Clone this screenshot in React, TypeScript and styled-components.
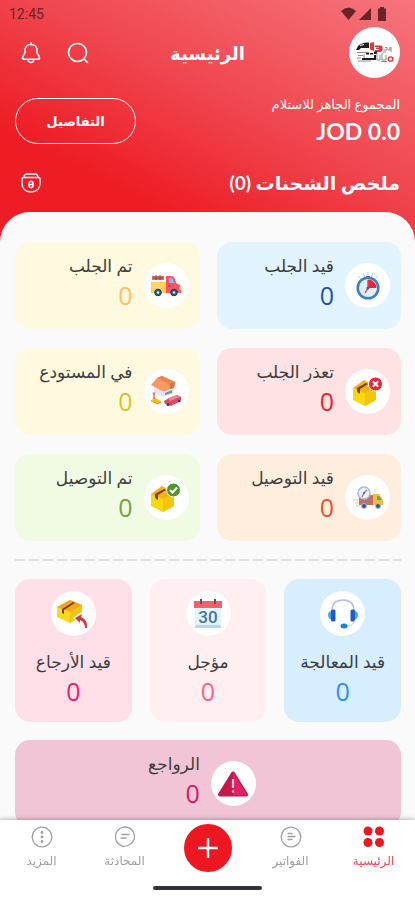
import React from "react";
import styled, { createGlobalStyle } from "styled-components";

const GlobalStyle = createGlobalStyle`
  *, *::before, *::after { box-sizing: border-box; }
  body { margin: 0; background: #fafafa; }
  button { font: inherit; color: inherit; background: none; border: 0; padding: 0; cursor: pointer; }
  h1, h2, h3, p { margin: 0; font-weight: normal; }
  svg { display: block; flex: none; }
`;

const Screen = styled.div`
  display: flex;
  flex-direction: column;
  height: 100vh;
  background: #ee1c25;
  font-family: Lato, "DejaVu Sans", sans-serif;
  color: #3d3d3f;
`;

const Header = styled.header`
  display: flex;
  flex-direction: column;
  margin-bottom: -36px;
  padding-bottom: 50px;
  color: #fff;
  background: linear-gradient(207deg, #f6757d 0%, #f0474f 42%, #ee1c25 74%);
`;

const StatusBar = styled.div`
  display: flex;
  align-items: center;
  justify-content: space-between;
  height: 27px;
  padding: 0 25px 0 9px;
  font-family: Roboto, sans-serif;
  font-size: 14px;
  color: #6b2327;
`;

const StatusIcons = styled.div`
  display: flex;
  gap: 3px;
`;

const TopBar = styled.div`
  display: grid;
  grid-template-columns: 1fr auto 1fr;
  align-items: center;
  padding: 0 15px;
`;

const Avatar = styled.div`
  display: grid;
  place-items: center;
  width: 51px;
  height: 51px;
  border-radius: 50%;
  background: #fff;
`;

const PageTitle = styled.h1`
  font-size: 18px;
  font-weight: bold;
  line-height: 28px;
`;

const Actions = styled.div`
  display: flex;
  justify-content: flex-end;
  gap: 25px;
  padding-left: 6px;
`;

const BalanceRow = styled.div`
  display: flex;
  align-items: center;
  justify-content: space-between;
  padding: 16px 15px 0;
`;

const BalanceLabel = styled.p`
  font-size: 13px;
  line-height: 20px;
`;

const BalanceValue = styled.p`
  font-size: 23px;
  font-weight: bold;
  line-height: 34px;
`;

const DetailsButton = styled.button`
  width: 121px;
  height: 46px;
  border: 1px solid #fff;
  border-radius: 23px;
  font-size: 13px;
  font-weight: bold;
`;

const SummaryRow = styled.div`
  display: flex;
  align-items: center;
  justify-content: space-between;
  padding: 20px 15px 0 21px;
`;

const SummaryTitle = styled.h2`
  font-size: 19px;
  font-weight: bold;
  line-height: 30px;
`;

const Sheet = styled.main`
  display: flex;
  flex: 1;
  flex-direction: column;
  gap: 18px;
  min-height: 0;
  padding: 30px 14px 24px 15px;
  overflow-y: auto;
  scrollbar-width: none;
  border-radius: 30px 30px 0 0;
  background: #fafafa;
`;

const PairGrid = styled.section`
  display: grid;
  grid-template-columns: 1fr 1fr;
  gap: 19px 17px;
`;

const TripleGrid = styled.section`
  display: grid;
  grid-template-columns: repeat(3, 1fr);
  gap: 18px;
`;

const Card = styled.button<{ $tint: string; $centered?: boolean }>`
  display: flex;
  flex: none;
  align-items: center;
  justify-content: ${(p) => (p.$centered ? "center" : "flex-start")};
  gap: 11px;
  height: 87px;
  padding: ${(p) => (p.$centered ? "0 20px 0 8px" : "0 11px")};
  border-radius: 15px;
  background: ${(p) => p.$tint};
  text-align: right;
`;

const TallCard = styled.button<{ $tint: string }>`
  display: flex;
  flex-direction: column;
  align-items: center;
  padding: 12px 0 15px;
  border-radius: 15px;
  background: ${(p) => p.$tint};
`;

const IconDisc = styled.span`
  display: grid;
  flex: none;
  place-items: center;
  width: 45px;
  height: 45px;
  border-radius: 50%;
  background: #fff;
`;

const CardText = styled.span`
  display: flex;
  flex-direction: column;
  padding-bottom: 9px;
`;

const CardLabel = styled.span`
  font-size: 17px;
  line-height: 28px;
`;

const TallLabel = styled(CardLabel)`
  margin-top: 12px;
`;

const Count = styled.span<{ $color: string }>`
  font-family: "Open Sans", sans-serif;
  font-size: 25px;
  line-height: 31px;
  color: ${(p) => p.$color};
`;

const Divider = styled.hr`
  flex: none;
  width: 100%;
  height: 2px;
  margin: 0;
  border: 0;
  background: repeating-linear-gradient(90deg, #e0e0e0 0 10px, transparent 10px 14px);
`;

const BottomBar = styled.footer`
  z-index: 1;
  flex: none;
  padding-bottom: 10px;
  background: #fff;
  box-shadow: 0 -1px 4px rgba(0, 0, 0, 0.28);
`;

const Nav = styled.nav`
  display: grid;
  grid-template-columns: repeat(5, 1fr);
  height: 66px;
`;

const NavItem = styled.a<{ $active?: boolean }>`
  display: flex;
  flex-direction: column;
  align-items: center;
  gap: 3px;
  padding-top: 6px;
  font-size: 12px;
  line-height: 20px;
  text-decoration: none;
  color: ${(p) => (p.$active ? "#ef4a52" : "#a0a0a0")};
`;

const AddButton = styled.button`
  display: grid;
  place-items: center;
  justify-self: center;
  width: 48px;
  height: 48px;
  margin-top: 4px;
  border-radius: 50%;
  background: #ee1620;
`;

const HomeIndicator = styled.div`
  width: 109px;
  height: 4px;
  margin: 0 auto;
  border-radius: 2px;
  background: #333437;
`;

const line = { fill: "none", stroke: "currentColor", strokeLinecap: "round", strokeLinejoin: "round" } as const;

const LogoMark = () => (
  <svg width="38" height="23" viewBox="0 0 38 23">
    <path d="M0 9 2 5Q6 1 13 1.500V7H5L3 9Z" fill="#202022" />
    <path d="M4 4.500 8 3.500" stroke="#fff" strokeWidth="1" />
    <path d="M14 2 18 1V10L14 8.500ZM19 4.500h5q3 0 2.500 3 .5 3.500-3.500 3.500h-4V9h4V8h-3V6.500h3V6h-4z" fill="#ed3037" />
    <path d="M28 9h3V6.500h-2M32 9h2V6M35 6v5M27 11h3" fill="none" stroke="#858585" strokeWidth="1" />
    <path d="M1 11.500h9M2 14.500h5M1 17h4M8 13v4M2 20h13" fill="none" stroke="#8a8c8f" strokeWidth="1" />
    <path d="M6 17h12v-3h2v5H6zM10 11.500h3v2h-3zM14 12h3v1.500h-3zM18 10.500h3V13h-3z" fill="#1f1f21" />
    <path d="M21 12v7h3v-5M26 12v7h4v-5M25 20.500h6" fill="none" stroke="#8a8a8c" strokeWidth="1" />
    <ellipse cx="34.500" cy="18" rx="2.300" ry="2.200" fill="none" stroke="#ed3037" strokeWidth="1.300" />
  </svg>
);

const BellIcon = () => (
  <svg width="20" height="22" viewBox="0 0 20 22" {...line} strokeWidth="1.600">
    <path d="M10 1v1.500M10 2.500c-3.500 0-6 2.500-6 6v2.200c0 1-2.500 3-2.500 5.300 0 1 1 1.200 2 1.200h13c1 0 2-.2 2-1.200 0-2.300-2.500-4.300-2.500-5.300V8.500c0-3.500-2.500-6-6-6Z" />
    <path d="M7 18c.6 1.600 1.600 2.500 3 2.500s2.400-.9 3-2.500" />
  </svg>
);

const SearchIcon = () => (
  <svg width="24" height="22" viewBox="0 0 24 22" {...line} strokeWidth="1.600">
    <circle cx="11.500" cy="10.500" r="9" />
    <path d="m18.500 17.500 3 3" />
  </svg>
);

const PouchIcon = () => (
  <svg width="20" height="20" viewBox="0 0 20 20" {...line} strokeWidth="1.500">
    <path d="M3 4Q3.500 1 6 1h8q2.500 0 3 3M1 6Q1 4.500 3 4.500h14q2 0 2 1.500v4c0 5.500-3.500 9-9 9s-9-3.500-9-9Z" />
    <rect x="8" y="8.500" width="4" height="6" rx="1.500" />
    <path d="M8.500 11.500h3" />
  </svg>
);

const StopwatchIcon = () => (
  <svg width="26" height="30" viewBox="0 0 26 30" fill="none">
    <path d="M3 5 6 8M8 2l2 5M13 1v4M18 2l-2 5M23 5l-3 3" stroke="#a9cdea" strokeWidth="1" />
    <path d="M11 5h4v3h-4z" fill="#3979bd" />
    <circle cx="13" cy="17" r="10.300" fill="#e3edf8" stroke="#397fc8" strokeWidth="2.500" />
    <path d="M13 17V8.500a8.500 8.500 0 0 1 8.500 8.500Z" fill="#ed2739" />
    <path d="m10 22 3-5V9" stroke="#e64350" strokeWidth="1.400" />
    <circle cx="13" cy="17" r="1.500" fill="#485c83" />
  </svg>
);

const PickupIcon = () => (
  <svg width="30" height="23" viewBox="0 0 30 23">
    <path d="M1 6V2h12v4" fill="#d96f59" />
    <path d="M2 4h10M5 1v5M9 1v5" stroke="#894c4f" />
    <path d="M0 8h16v11H0z" fill="#ffcf57" />
    <path d="M1 10h13M1 13h10" stroke="#ffe181" />
    <path d="M15 19V2h5q4 0 5 7l4 2q1 2 1 8Z" fill="#fa5365" />
    <path d="M18 4h2q2 0 3 5h-5Z" fill="#7ac5ed" />
    <path d="M17 12h3" stroke="#b92f43" />
    <path d="M28 13h2v3h-2z" fill="#ffd270" />
    <g fill="#255b7d" stroke="#183e5c"><circle cx="7" cy="18.500" r="3.300" /><circle cx="23" cy="18.500" r="3.300" /></g>
    <g fill="#d5f0f6"><circle cx="7" cy="18.500" r="1.300" /><circle cx="23" cy="18.500" r="1.300" /></g>
  </svg>
);

const WarehouseIcon = () => (
  <svg width="30" height="31" viewBox="0 0 30 31">
    <path d="m3 10 9 5v6L3 16ZM12 15l11-4v6l-11 4Z" fill="#dfe6f0" />
    <path d="m14 17 7-3v3l-7 2Z" fill="#7d8ba3" />
    <path d="M0 9 6 2 11 0 24 6 23 12 12 15.500Z" fill="#f49a62" />
    <path d="M6 2 11 0 24 6 18 8Z" fill="#ec8450" />
    <path d="m18 8 6-2-1 6-4 1Z" fill="#d9744a" />
    <path d="m13 25 5-3 8-3 4 2v4l-10 5-6-2Z" fill="#d64f66" />
    <path d="m17 22 9-3 3 2-10 4Z" fill="#ee8490" />
    <g fill="#5c3144"><circle cx="17" cy="28.500" r="1.500" /><circle cx="28" cy="25" r="1.300" /></g>
    <path d="m0 24 4-2 6 3-3 3-7-2Z" fill="#f5bd18" />
    <path d="M3 18v5" stroke="#e14d46" strokeWidth="1.200" />
    <circle cx="3" cy="17.500" r="1.300" fill="#ef7769" />
    <path d="m3 26 3 2 4-2" fill="none" stroke="#b98e25" />
  </svg>
);

const BoxShape = () => (
  <g>
    <path d="M0 11 11 5l12 5v13L12 29 0 23Z" fill="#f9d80e" />
    <path d="m12 16 11-6v13l-11 6Z" fill="#f3c50c" />
    <path d="m0 11 11-8 12 7-11 6Z" fill="#faae16" />
    <path d="m4 11 9-5 2 1-8 5v5l-3-2Z" fill="#744216" />
  </g>
);

const BoxFailedIcon = () => (
  <svg width="30" height="30" viewBox="0 0 30 30">
    <BoxShape />
    <circle cx="22.500" cy="7" r="7" fill="#e52934" stroke="#fff" />
    <path d="m19.800 4.300 5.400 5.400m0-5.400-5.400 5.400" stroke="#fff" strokeWidth="2" />
  </svg>
);

const BoxDoneIcon = () => (
  <svg width="30" height="30" viewBox="0 0 30 30">
    <BoxShape />
    <circle cx="22.500" cy="7" r="7" fill="#50982c" stroke="#fff" />
    <path d="m19 7 2.500 2.500 4.500-5" fill="none" stroke="#fff" strokeWidth="2" />
  </svg>
);

const FastTruckIcon = () => (
  <svg width="30" height="23" viewBox="0 0 30 23">
    <path d="M0 14h7M2 17h6M3 20h4" stroke="#f6cf95" strokeWidth="1" />
    <path d="M6 9h16v10H6Z" fill="#bb7068" />
    <path d="M20 8h6l4 6v5H20Z" fill="#f7bf24" />
    <path d="M24 10h2l3 4h-5Z" fill="#569eae" />
    <g fill="#364f94" stroke="#aac1de"><circle cx="11" cy="20" r="2.500" /><circle cx="25" cy="20" r="2.500" /></g>
    <circle cx="11" cy="7" r="6" fill="#e8f2fb" stroke="#a7bee2" strokeWidth="1.500" />
    <path d="m14 4-3 3-2 4" fill="none" stroke="#df5b61" strokeWidth="1.200" /><circle cx="11" cy="7" r="1" fill="#465d9c" />
  </svg>
);

const HeadsetIcon = () => (
  <svg width="30" height="30" viewBox="0 0 30 30" fill="none">
    <path d="M4 12C4 5 8 1 15 1s11 4 11 11" stroke="#b1bbed" strokeWidth="1.400" />
    <path d="M0 16q0-4 4-4v9q-4-1-4-5M30 16q0-4-4-4v9q4-1 4-5" fill="#44a7ec" />
    <rect x="3" y="10.500" width="4.500" height="12" rx="1.500" fill="#205cc1" />
    <rect x="22.500" y="10.500" width="4.500" height="12" rx="1.500" fill="#205cc1" />
    <path d="M27 21q-1 6-9 6" stroke="#b9cced" />
    <ellipse cx="16" cy="27" rx="3.500" ry="2.500" fill="#1484dc" />
  </svg>
);

const CalendarIcon = () => (
  <svg width="28" height="30" viewBox="0 0 28 30">
    <path d="M1 8h26v20H1Z" fill="#e4f3fc" /><path d="M1 26h26v3H1Z" fill="#b8d8f2" />
    <path d="M0 2h28v7H0Z" fill="#ef626a" />
    <path d="M7 0v5M21 0v5" stroke="#6e4b67" strokeWidth="2" />
    <text x="14" y="24" textAnchor="middle" fontFamily="Roboto, sans-serif" fontSize="17" fontWeight="500" fill="#43759d">30</text>
  </svg>
);

const BoxReturnIcon = () => (
  <svg width="32" height="30" viewBox="0 0 32 30">
    <path d="M0 8 13 1l12 5v11l-12 7L0 18Z" fill="#ffd81a" />
    <path d="m13 13 12-7v11l-12 7Z" fill="#f3c613" />
    <path d="m0 8 13-7 12 5-12 7Z" fill="#f9a51c" />
    <path d="m5 10 11-7 2 1-11 7v4l-2-1Z" fill="#6d471b" />
    <path d="m16 19 8-6 8 7v10h-6l-4-5Z" fill="#fff" />
    <path d="m18 19 7-4-1 3q7 3 6 11h-2q0-6-5-8v3Z" fill="#d8393f" />
  </svg>
);

const WarningIcon = () => (
  <svg width="30" height="26" viewBox="0 0 30 26">
    <path d="M15 2.500 28 23.500H2Z" fill="#cf174e" stroke="#c6184b" strokeWidth="4" strokeLinejoin="round" />
    <path d="M15 1 29 24H15Z" fill="#e02366" />
    <path d="M15 8v9M15 19.500v2" stroke="#ffd3e1" strokeWidth="2.200" />
  </svg>
);

const HomeIcon = () => (
  <svg width="22" height="22" viewBox="0 0 22 22" fill="#ee1620">
    <circle cx="5" cy="5" r="4.500" /><circle cx="16.500" cy="5" r="4.500" />
    <circle cx="5" cy="16.500" r="4.500" /><circle cx="16.500" cy="16.500" r="4.500" />
  </svg>
);

const InvoiceIcon = () => (
  <svg width="22" height="22" viewBox="0 0 22 22" {...line} strokeWidth="1.300">
    <circle cx="11" cy="11" r="9.800" /><path d="M8 7.500h4M8 10.500h7M8 13.500h4" />
  </svg>
);

const ChatIcon = () => (
  <svg width="22" height="22" viewBox="0 0 22 22" {...line} strokeWidth="1.300">
    <path d="M9 20.500q-1 0-1.500-1C3.500 18 1.500 15 1.500 11A9.500 9.500 0 1 1 14 19.500Q11 20.500 9 20.500Z" />
    <path d="M8 8.500h7M7 12h5" />
  </svg>
);

const MoreIcon = () => (
  <svg width="22" height="22" viewBox="0 0 22 22" {...line} strokeWidth="1.300">
    <circle cx="11" cy="11" r="9.800" />
    <g fill="currentColor" stroke="none"><circle cx="11" cy="6.500" r="1.400" /><circle cx="11" cy="11" r="1.400" /><circle cx="11" cy="15.500" r="1.400" /></g>
  </svg>
);

const pairs = [
  { label: "قيد الجلب", tint: "#e1f4ff", color: "#1c55a5", icon: <StopwatchIcon /> },
  { label: "تم الجلب", tint: "#fff9df", color: "#ffc15c", icon: <PickupIcon /> },
  { label: "تعذر الجلب", tint: "#ffe2e3", color: "#ec1f2e", icon: <BoxFailedIcon /> },
  { label: "في المستودع", tint: "#fff9df", color: "#d9c51f", icon: <WarehouseIcon /> },
  { label: "قيد التوصيل", tint: "#ffeede", color: "#e2582a", icon: <FastTruckIcon /> },
  { label: "تم التوصيل", tint: "#f1fbe4", color: "#6fa53a", icon: <BoxDoneIcon /> },
];

const triples = [
  { label: "قيد المعالجة", tint: "#d7eeff", color: "#2e8dfb", icon: <HeadsetIcon /> },
  { label: "مؤجل", tint: "#ffeff1", color: "#f7638a", icon: <CalendarIcon /> },
  { label: "قيد الأرجاع", tint: "#ffdfe8", color: "#ec1a68", icon: <BoxReturnIcon /> },
];

export default function App() {
  return (
    <>
      <GlobalStyle />
      <Screen dir="rtl" lang="ar">
        <Header>
          <StatusBar dir="ltr">
            <span>12:45</span>
            <StatusIcons>
              <svg width="15" height="14" viewBox="0 0 15 14" fill="currentColor"><path d="M0 4Q7.500-3 15 4L7.500 13Z" /></svg>
              <svg width="12" height="14" viewBox="0 0 12 14" fill="currentColor"><path d="M12 1v12H0Z" /></svg>
              <svg width="16" height="14" viewBox="0 0 16 14" fill="currentColor"><path d="M6 0h4v1.500h2V14H4V1.500h2Z" /></svg>
            </StatusIcons>
          </StatusBar>
          <TopBar>
            <Avatar><LogoMark /></Avatar>
            <PageTitle>الرئيسية</PageTitle>
            <Actions>
              <button type="button" aria-label="بحث"><SearchIcon /></button>
              <button type="button" aria-label="الإشعارات"><BellIcon /></button>
            </Actions>
          </TopBar>
          <BalanceRow>
            <div>
              <BalanceLabel>المجموع الجاهز للاستلام</BalanceLabel>
              <BalanceValue><bdi dir="ltr">JOD 0.0</bdi></BalanceValue>
            </div>
            <DetailsButton type="button">التفاصيل</DetailsButton>
          </BalanceRow>
          <SummaryRow>
            <SummaryTitle>ملخص الشحنات (0)</SummaryTitle>
            <button type="button" aria-label="الشحنات"><PouchIcon /></button>
          </SummaryRow>
        </Header>
        <Sheet>
          <PairGrid>
            {pairs.map((c) => (
              <Card key={c.label} type="button" $tint={c.tint}>
                <IconDisc>{c.icon}</IconDisc>
                <CardText>
                  <CardLabel>{c.label}</CardLabel>
                  <Count $color={c.color}>0</Count>
                </CardText>
              </Card>
            ))}
          </PairGrid>
          <Divider />
          <TripleGrid>
            {triples.map((c) => (
              <TallCard key={c.label} type="button" $tint={c.tint}>
                <IconDisc>{c.icon}</IconDisc>
                <TallLabel>{c.label}</TallLabel>
                <Count $color={c.color}>0</Count>
              </TallCard>
            ))}
          </TripleGrid>
          <Card type="button" $tint="#f2c5d6" $centered>
            <IconDisc><WarningIcon /></IconDisc>
            <CardText>
              <CardLabel>الرواجع</CardLabel>
              <Count $color="#cf1d66">0</Count>
            </CardText>
          </Card>
        </Sheet>
        <BottomBar>
          <Nav>
            <NavItem href="#home" $active><HomeIcon />الرئيسية</NavItem>
            <NavItem href="#invoices"><InvoiceIcon />الفواتير</NavItem>
            <AddButton type="button" aria-label="إضافة">
              <svg width="20" height="20" viewBox="0 0 20 20" stroke="#fff" strokeWidth="2.500"><path d="M10 0v20M0 10h20" /></svg>
            </AddButton>
            <NavItem href="#chat"><ChatIcon />المحادثة</NavItem>
            <NavItem href="#more"><MoreIcon />المزيد</NavItem>
          </Nav>
          <HomeIndicator />
        </BottomBar>
      </Screen>
    </>
  );
}
